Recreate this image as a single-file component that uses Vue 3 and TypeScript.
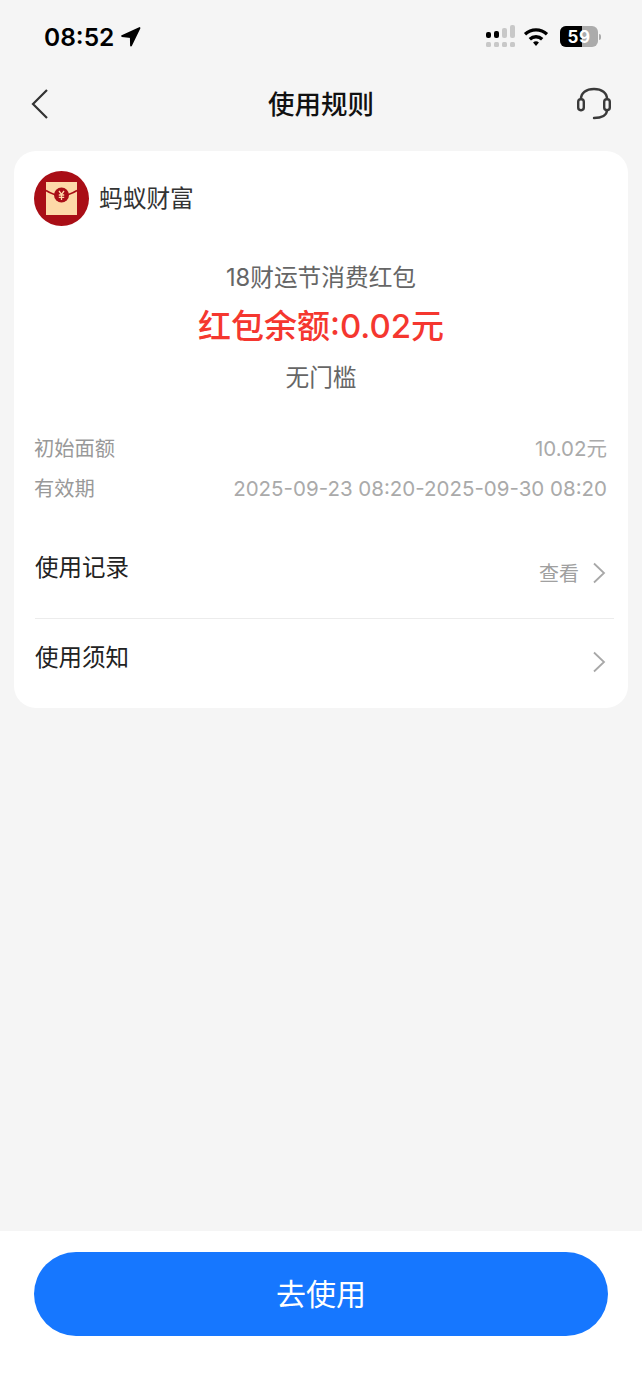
<script setup lang="ts">
const details = [
  { label: '初始面额', value: '10.02元' },
  { label: '有效期', value: '2025-09-23 08:20-2025-09-30 08:20' },
]
const dots = [0, 1, 2, 3]
const bars = [
  { h: 6, on: true },
  { h: 7, on: true },
  { h: 10, on: false },
  { h: 13, on: false },
]
</script>

<template>
  <div class="page">
    <header class="status">
      <div class="time-wrap">
        <span class="time">08:52</span>
        <svg class="loc" width="21" height="20" viewBox="0 0 21 20"><path d="M19.500 1 2 9l8.800 1.200L11 18.500z" fill="#000" stroke="#000" stroke-width="1.800" stroke-linejoin="round" /></svg>
      </div>
      <div class="sys">
        <div class="signal">
          <div class="bars">
            <i v-for="(b, n) in bars" :key="n" class="bar" :class="{ on: b.on }" :style="{ height: b.h + 'px' }"></i>
          </div>
          <div class="dots"><i v-for="d in dots" :key="d" class="dot"></i></div>
        </div>
        <svg class="wifi" width="28" height="21" viewBox="0 0 26 20">
          <path d="M1.500 6.600 3.600 9A13.500 13.500 0 0 1 22.400 9l2.100-2.400A17 17 0 0 0 1.500 6.600z" fill="#000" />
          <path d="M6 11.400l2.200 2.500a7 7 0 0 1 9.600 0l2.200-2.500a10.300 10.300 0 0 0-14 0z" fill="#000" />
          <path d="M10.200 15.800 13 19l2.800-3.200a4.100 4.100 0 0 0-5.600 0z" fill="#000" />
        </svg>
        <div class="battery">
          <div class="batt-body"><span class="batt-fill"></span><span class="batt-num">59</span></div>
          <i class="batt-tip"></i>
        </div>
      </div>
    </header>

    <nav class="nav">
      <svg class="back" width="20" height="32" viewBox="0 0 20 32"><path d="M17 2 3 16l14 14" fill="none" stroke="#333" stroke-width="2.200" /></svg>
      <h1 class="title">使用规则</h1>
      <svg class="service" width="36" height="36" viewBox="0 0 36 36" fill="none" stroke="#3a3a3a" stroke-width="2.400">
        <path d="M5 13C5 7 10 3 18 3s13 4 13 10" />
        <rect x="2.200" y="13.200" width="5.600" height="11" rx="2.600" />
        <rect x="28.200" y="13.200" width="5.600" height="11" rx="2.600" />
        <path d="M31 24c0 5-5 8-13 8" stroke-linecap="round" />
      </svg>
    </nav>

    <main class="card">
      <div class="brand">
        <svg class="logo" width="55" height="55" viewBox="0 0 55 55">
          <circle cx="27.500" cy="27.500" r="27.500" fill="#a90e16" />
          <rect x="12" y="11" width="31" height="33" fill="#fdd9a8" />
          <path d="M12 19.500q8 5 15.500 5t15.500-5" fill="none" stroke="#a90e16" stroke-width="1.600" />
          <circle cx="27.500" cy="24" r="7.500" fill="#a90e16" />
          <path d="M25 20l2.500 3.500 2.500-3.500M27.500 23.500V29M24.800 24h5.400M24.800 26.300h5.400" fill="none" stroke="#fdd9a8" stroke-width="1.300" />
        </svg>
        <span class="brand-name">蚂蚁财富</span>
      </div>

      <section class="summary">
        <p class="coupon">18财运节消费红包</p>
        <p class="balance">红包余额:0.02元</p>
        <p class="limit">无门槛</p>
      </section>

      <section class="details">
        <div v-for="d in details" :key="d.label" class="detail">
          <span>{{ d.label }}</span>
          <span class="detail-value">{{ d.value }}</span>
        </div>
      </section>

      <div class="row first-row">
        <span class="row-label">使用记录</span>
        <div class="row-right">
          <span class="row-hint">查看</span>
          <svg width="14" height="22" viewBox="0 0 14 22"><path d="M2 1.500 12 11 2 20.500" fill="none" stroke="#a8a8a8" stroke-width="1.800" /></svg>
        </div>
      </div>
      <div class="row second-row">
        <span class="row-label">使用须知</span>
        <div class="row-right">
          <svg width="14" height="22" viewBox="0 0 14 22"><path d="M2 1.500 12 11 2 20.500" fill="none" stroke="#a8a8a8" stroke-width="1.800" /></svg>
        </div>
      </div>
    </main>

    <footer class="footer">
      <button class="cta" type="button">去使用</button>
    </footer>
  </div>
</template>

<style>
html, body { margin: 0; background: #f5f5f5; }
</style>

<style scoped>
.page {
  width: 642px;
  height: 1389px;
  display: flex;
  flex-direction: column;
  background: #f5f5f5;
  font-family: Inter, "Noto Sans CJK SC", sans-serif;
  overflow: hidden;
}
.status {
  height: 72px;
  box-sizing: border-box;
  padding: 22px 41px 0 44px;
  display: flex;
  justify-content: space-between;
  align-items: flex-start;
}
.time-wrap { display: flex; align-items: center; gap: 6px; height: 29px; }
.time { font-size: 24.500px; font-weight: 600; color: #000; }
.sys { display: flex; align-items: center; gap: 8px; margin-top: 4px; }
.signal { display: flex; flex-direction: column; gap: 4px; width: 30px; margin-right: -2px; }
.bars { display: flex; gap: 3px; align-items: flex-end; height: 12px; }
.bar { width: 5px; border-radius: 2px; background: #c8c8c8; }
.bar.on { background: #000; }
.dots { display: flex; gap: 3px; }
.dot { width: 5px; height: 5px; border-radius: 1.500px; background: #c8c8c8; }
.wifi { margin-right: 2px; }
.battery { display: flex; align-items: center; gap: 1px; }
.batt-body {
  position: relative;
  width: 38px;
  height: 21px;
  border-radius: 6px;
  background: #ababab;
  overflow: hidden;
  display: flex;
  align-items: center;
  justify-content: center;
}
.batt-fill { position: absolute; left: 0; top: 0; bottom: 0; width: 22px; background: #000; }
.batt-num { position: relative; font-size: 17px; font-weight: 700; color: #fff; letter-spacing: 0.500px; }
.batt-tip { width: 2px; height: 6px; border-radius: 0 2px 2px 0; background: #ababab; }
.nav {
  height: 64px;
  display: flex;
  align-items: center;
  justify-content: space-between;
  padding: 0 30px;
  position: relative;
  margin-bottom: 15px;
}
.title {
  position: absolute;
  left: 0;
  right: 0;
  margin: -4px 0 0;
  text-align: center;
  font-size: 26.500px;
  font-weight: 500;
  color: #111;
}
.back { position: relative; }
.service { position: relative; }
.card {
  margin: 0 14px;
  height: 557px;
  box-sizing: border-box;
  background: #fff;
  border-radius: 22px;
  padding: 20px 14px 0 20px;
  display: flex;
  flex-direction: column;
}
.brand { display: flex; align-items: center; gap: 10px; }
.brand-name { font-size: 23.700px; color: #333; margin-top: -4px; }
.summary { margin-top: 34px; text-align: center; margin-left: -6px; }
.summary p { margin: 0; }
.coupon { font-size: 23.700px; line-height: 36px; color: #666; }
.balance { font-size: 33px; line-height: 50px; font-weight: 500; color: #f5372f; margin-top: 5px !important; }
.limit { font-size: 23.700px; line-height: 36px; color: #666; margin-top: 9px !important; }
.details { margin-top: 38px; display: flex; flex-direction: column; gap: 10px; padding-right: 7px; }
.detail { display: flex; justify-content: space-between; font-size: 20.300px; line-height: 30px; color: #999; }
.detail-value { color: #aaa; font-size: 20.500px; }
.row { height: 90px; display: flex; align-items: center; justify-content: space-between; margin-left: 1px; }
.first-row { margin-top: 24px; border-bottom: 1px solid #ececec; }
.row-label { font-size: 23.500px; color: #222; margin-top: -13px; }
.second-row .row-label { margin-top: -15px; }
.second-row .row-right { margin-top: -2px; }
.row-right { display: flex; align-items: center; gap: 13px; padding-right: 8px; }
.row-hint { font-size: 20px; color: #a0a0a0; }
.footer { margin-top: auto; height: 158px; box-sizing: border-box; background: #fff; padding: 21px 34px 0; }
.cta {
  width: 100%;
  height: 84px;
  border: none;
  border-radius: 42px;
  background: #1677ff;
  color: #fff;
  font-family: inherit;
  font-size: 30px;
  padding: 0 0 4px;
}
</style>
